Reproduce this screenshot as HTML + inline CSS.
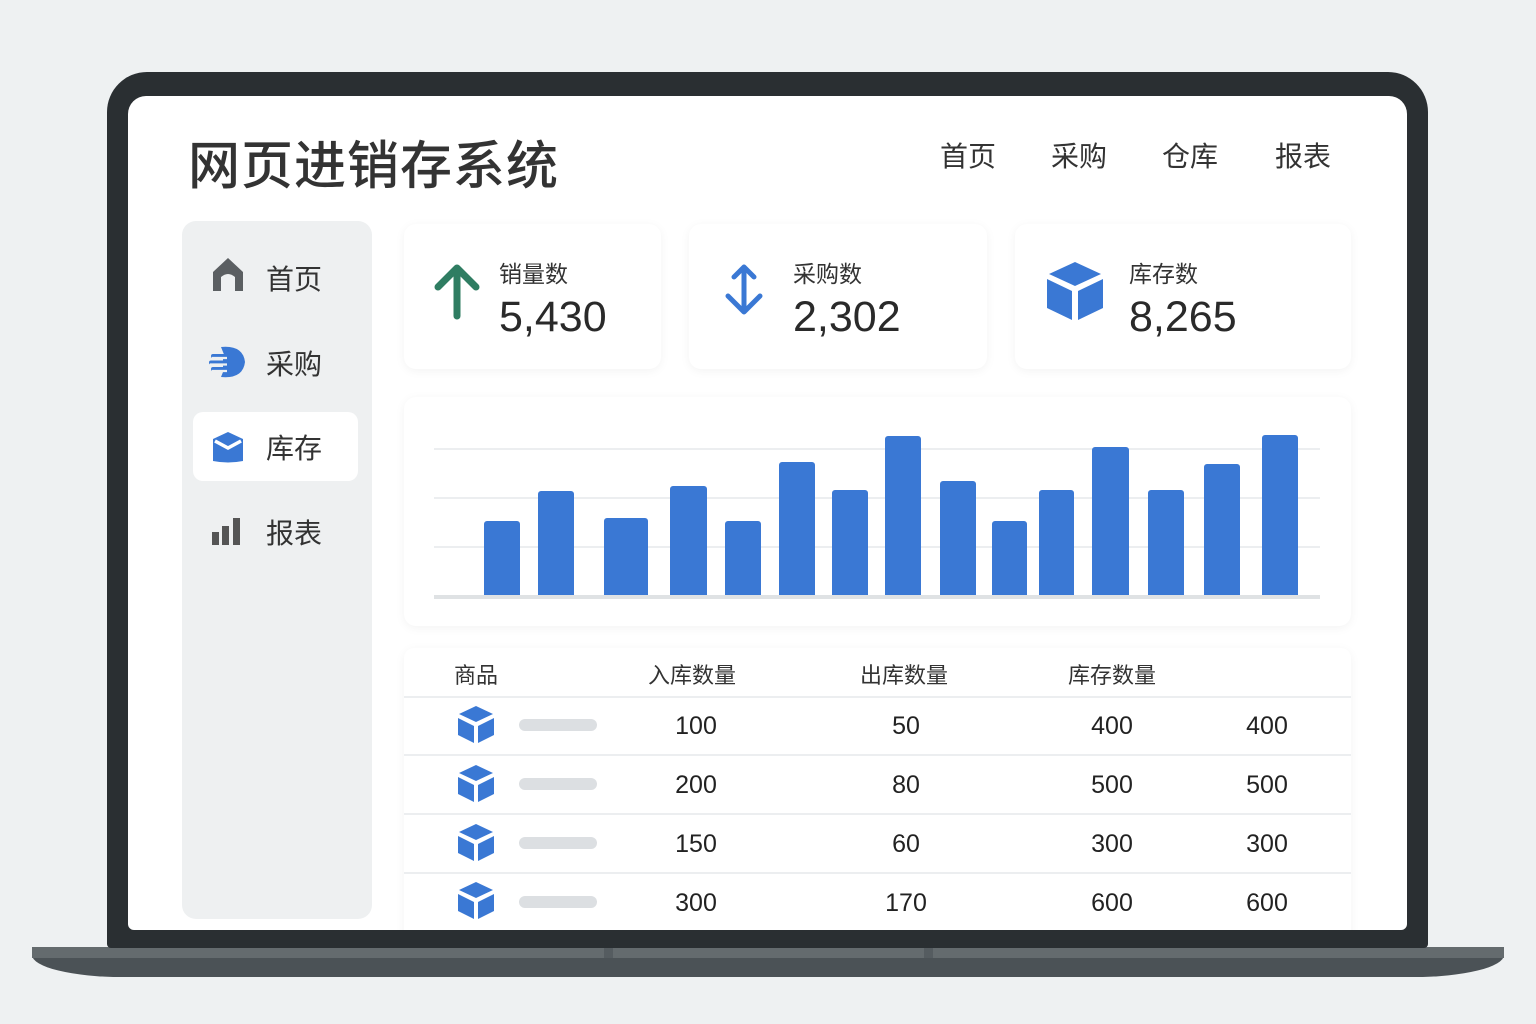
<!DOCTYPE html>
<html><head><meta charset="utf-8"><style>
*{margin:0;padding:0;box-sizing:border-box}
body{width:1536px;height:1024px;background:#eef1f2;position:relative;overflow:hidden;font-family:"Liberation Sans","Noto Sans CJK SC",sans-serif;color:#333}
.a{position:absolute}
.card{position:absolute;background:#fff;border-radius:12px;box-shadow:0 2px 10px rgba(0,0,0,.05)}
.t{position:absolute;white-space:nowrap}
.bar{position:absolute;bottom:0;width:36px;background:#3a78d4;border-radius:3px 3px 0 0}
.gl{position:absolute;left:30px;width:886px;height:2px;background:#eceef0}
.num{position:absolute;font-size:25px;color:#222;transform:translateX(-50%)}
.hd{position:absolute;font-size:22px;color:#333;transform:translateX(-50%)}
.div{position:absolute;left:0;width:947px;height:2px;background:#eceef0}
.pill{position:absolute;left:115px;width:78px;height:12px;border-radius:6px;background:#dcdfe2}
</style></head><body>
<!-- base -->
<div class="a" style="left:32px;top:947px;width:1472px;height:30px;background:#4b5256;border-radius:0 0 90px 90px/0 0 22px 22px;"></div>
<div class="a" style="left:32px;top:947px;width:1472px;height:11px;background:#646b6e"></div>
<div class="a" style="left:604px;top:947px;width:9px;height:11px;background:#555c60"></div>
<div class="a" style="left:924px;top:947px;width:9px;height:11px;background:#555c60"></div>
<!-- bezel -->
<div class="a" style="left:107px;top:72px;width:1321px;height:876px;background:#2a2f32;border-radius:40px 40px 4px 4px"></div>
<div class="a" style="left:128px;top:96px;width:1279px;height:834px;background:#fff;border-radius:18px 18px 6px 6px;overflow:hidden">
  <div class="t" style="left:60px;top:28px;font-size:52px;color:#333;letter-spacing:1px;font-weight:500">网页进销存系统</div>
  <div class="t" style="left:812px;top:39px;font-size:28px">首页</div>
  <div class="t" style="left:923px;top:39px;font-size:28px">采购</div>
  <div class="t" style="left:1034px;top:39px;font-size:28px">仓库</div>
  <div class="t" style="left:1147px;top:39px;font-size:28px">报表</div>
  <!-- sidebar -->
  <div class="a" style="left:54px;top:125px;width:190px;height:698px;background:#eef0f1;border-radius:14px">
    <div class="a" style="left:11px;top:191px;width:165px;height:69px;background:#fff;border-radius:10px"></div>
    <svg class="a" style="left:29px;top:36px" width="34" height="36" viewBox="0 0 34 36"><path d="M17 1 L32 15 V34 H24 V20 Q17 14 10 20 V34 H2 V15 Z" fill="#5b5f62"/></svg>
    <div class="t" style="left:84px;top:37px;font-size:28px">首页</div>
    <svg class="a" style="left:27px;top:125px" width="38" height="32" viewBox="0 0 38 32"><path d="M12 1 Q34 -1 36 16 Q34 33 12 31 L18 16 Z" fill="#3a78d4"/><rect x="2" y="8" width="24" height="4" rx="2" fill="#3a78d4"/><rect x="0" y="14.5" width="26" height="4" rx="2" fill="#3a78d4"/><rect x="2" y="21" width="24" height="4" rx="2" fill="#3a78d4"/><path d="M14 8 H28 V25 H14" fill="#3a78d4"/><path d="M3 12 H18 M1 18.5 H18 M3 25 H18" stroke="#eef0f1" stroke-width="2.2"/></svg>
    <div class="t" style="left:84px;top:122px;font-size:28px">采购</div>
    <svg class="a" style="left:30px;top:210px" width="32" height="32" viewBox="0 0 32 32"><path d="M16 1 L31 8 V30 Q16 33 1 30 V8 Z" fill="#3a78d4"/><path d="M3 10 L16 17 L29 10" stroke="#fff" stroke-width="3.5" fill="none"/></svg>
    <div class="t" style="left:84px;top:206px;font-size:28px">库存</div>
    <svg class="a" style="left:30px;top:297px" width="30" height="28" viewBox="0 0 30 28"><rect x="0" y="14" width="7" height="13" fill="#555"/><rect x="10" y="8" width="7" height="19" fill="#555"/><rect x="21" y="0" width="7" height="27" fill="#555"/></svg>
    <div class="t" style="left:84px;top:291px;font-size:28px">报表</div>
  </div>
  <!-- stat cards -->
  <div class="card" style="left:276px;top:128px;width:257px;height:145px">
    <svg class="a" style="left:30px;top:40px" width="46" height="56" viewBox="0 0 46 56"><path d="M23 52 V5 M4 23 L23 4 L42 23" stroke="#2f7d62" stroke-width="7" fill="none" stroke-linecap="round" stroke-linejoin="round"/></svg>
    <div class="t" style="left:95px;top:31px;font-size:23px">销量数</div>
    <div class="t" style="left:95px;top:69px;font-size:43px;color:#2a2a2a">5,430</div>
  </div>
  <div class="card" style="left:561px;top:128px;width:298px;height:145px">
    <svg class="a" style="left:34px;top:38px" width="42" height="56" viewBox="0 0 42 56"><path d="M21 6 V50 M11 15 L21 5 L31 15 M5 34 L21 50 L37 34" stroke="#3a78d4" stroke-width="5" fill="none" stroke-linecap="round" stroke-linejoin="round"/></svg>
    <div class="t" style="left:104px;top:31px;font-size:23px">采购数</div>
    <div class="t" style="left:104px;top:69px;font-size:43px;color:#2a2a2a">2,302</div>
  </div>
  <div class="card" style="left:887px;top:128px;width:336px;height:145px">
    <svg class="a" style="left:32px;top:37px" width="56" height="60" viewBox="0 0 56 60"><path d="M28 1 L54 13 L28 25 L2 13 Z" fill="#3a78d4"/><path d="M0 18 L25 30 V59 L0 47 Z" fill="#3a78d4"/><path d="M56 18 L31 30 V59 L56 47 Z" fill="#3a78d4"/></svg>
    <div class="t" style="left:114px;top:31px;font-size:23px">库存数</div>
    <div class="t" style="left:114px;top:69px;font-size:43px;color:#2a2a2a">8,265</div>
  </div>
  <!-- chart -->
  <div class="card" style="left:276px;top:301px;width:947px;height:229px">
    <div class="gl" style="top:51px"></div>
    <div class="gl" style="top:100px"></div>
    <div class="gl" style="top:149px"></div>
    <div class="a" style="left:30px;top:0;width:886px;height:199px">
      <div class="bar" style="left:50px;height:75px"></div>
      <div class="bar" style="left:104px;height:105px"></div>
      <div class="bar" style="left:170px;width:44px;height:78px"></div>
      <div class="bar" style="left:236px;width:37px;height:110px"></div>
      <div class="bar" style="left:291px;height:75px"></div>
      <div class="bar" style="left:345px;height:134px"></div>
      <div class="bar" style="left:398px;height:106px"></div>
      <div class="bar" style="left:451px;height:160px"></div>
      <div class="bar" style="left:506px;height:115px"></div>
      <div class="bar" style="left:558px;width:35px;height:75px"></div>
      <div class="bar" style="left:605px;width:35px;height:106px"></div>
      <div class="bar" style="left:658px;width:37px;height:149px"></div>
      <div class="bar" style="left:714px;height:106px"></div>
      <div class="bar" style="left:770px;height:132px"></div>
      <div class="bar" style="left:828px;height:161px"></div>
    </div>
    <div class="gl" style="top:198px;height:4px;background:#dfe2e4"></div>
  </div>
  <!-- table -->
  <div class="card" style="left:276px;top:552px;width:947px;height:300px;border-radius:10px 10px 0 0">
    <div class="t" style="left:50px;top:10px;font-size:22px">商品</div>
    <div class="hd" style="left:288px;top:10px">入库数量</div>
    <div class="hd" style="left:500px;top:10px">出库数量</div>
    <div class="hd" style="left:708px;top:10px">库存数量</div>
    <div class="div" style="top:48px"></div>
    <div class="div" style="top:106px"></div>
    <div class="div" style="top:165px"></div>
    <div class="div" style="top:224px"></div>
  </div>
</div>
<svg width="0" height="0" style="position:absolute"><defs><g id="cube"><path d="M18 0 L35 8 L18 16 L1 8 Z" fill="#3a78d4"/><path d="M0 12 L16 20 V37 L0 29 Z" fill="#3a78d4"/><path d="M36 12 L20 20 V37 L36 29 Z" fill="#3a78d4"/></g></defs></svg>
<div class="a" style="left:404px;top:697px;width:947px;height:236px">
  <svg class="a" style="left:54px;top:9px" width="36" height="37"><use href="#cube"/></svg>
  <div class="pill" style="top:22px"></div>
  <div class="num" style="left:292px;top:15px">100</div><div class="num" style="left:502px;top:15px">50</div><div class="num" style="left:708px;top:15px">400</div><div class="num" style="left:863px;top:15px">400</div>
  <svg class="a" style="left:54px;top:68px" width="36" height="37"><use href="#cube"/></svg>
  <div class="pill" style="top:81px"></div>
  <div class="num" style="left:292px;top:74px">200</div><div class="num" style="left:502px;top:74px">80</div><div class="num" style="left:708px;top:74px">500</div><div class="num" style="left:863px;top:74px">500</div>
  <svg class="a" style="left:54px;top:127px" width="36" height="37"><use href="#cube"/></svg>
  <div class="pill" style="top:140px"></div>
  <div class="num" style="left:292px;top:133px">150</div><div class="num" style="left:502px;top:133px">60</div><div class="num" style="left:708px;top:133px">300</div><div class="num" style="left:863px;top:133px">300</div>
  <svg class="a" style="left:54px;top:185px" width="36" height="37"><use href="#cube"/></svg>
  <div class="pill" style="top:199px"></div>
  <div class="num" style="left:292px;top:192px">300</div><div class="num" style="left:502px;top:192px">170</div><div class="num" style="left:708px;top:192px">600</div><div class="num" style="left:863px;top:192px">600</div>
</div>
<div class="a" style="left:128px;top:930px;width:1279px;height:17px;background:#2a2f32"></div>
</body></html>
